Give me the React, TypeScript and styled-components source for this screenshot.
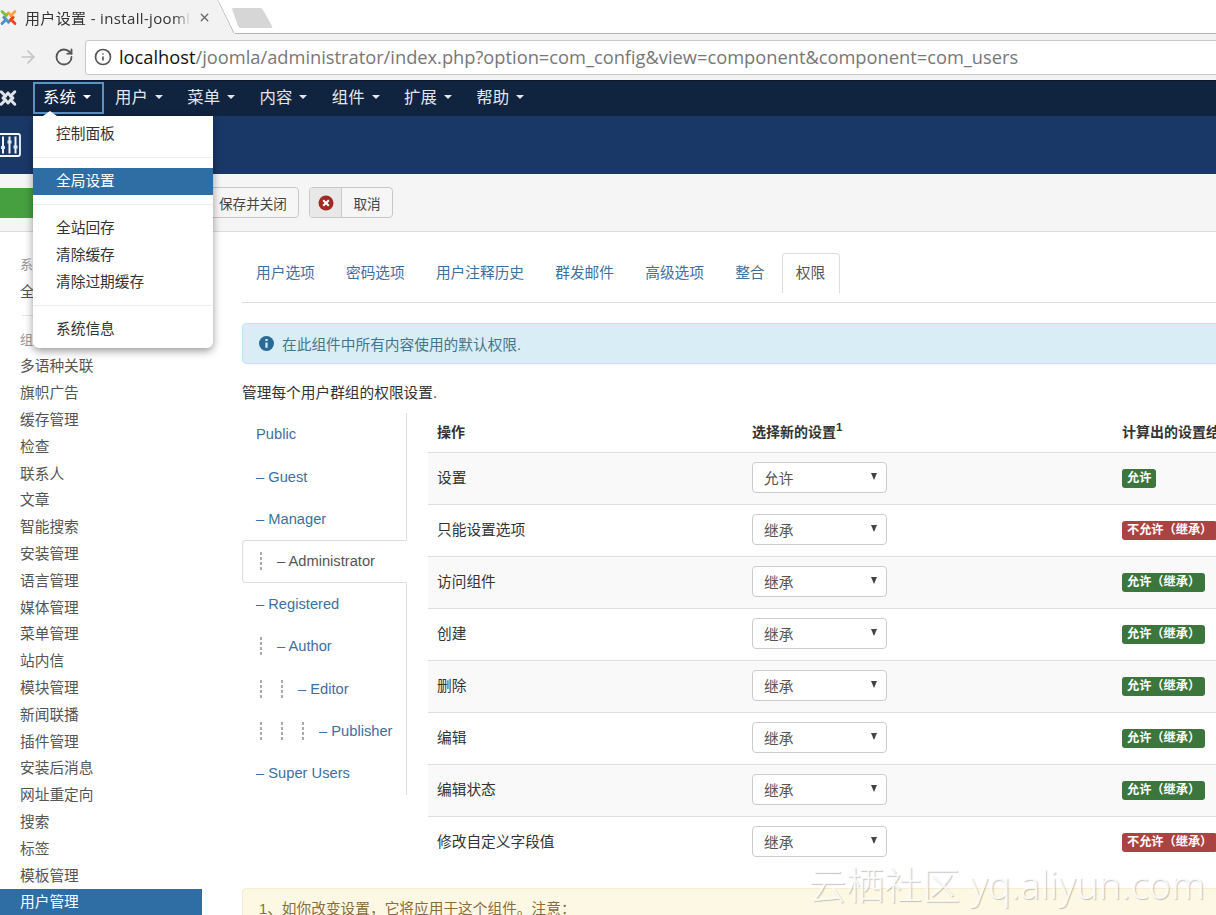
import React from "react";
import styled, { createGlobalStyle } from "styled-components";
import { ArrowLeft, ArrowRight, RotateCw, Info, X } from "lucide-react";

const Global = createGlobalStyle`
  html, body { margin: 0; padding: 0; background: #fff; }
  body { font-family: "Liberation Sans", "Noto Sans CJK SC", sans-serif; font-size: 14.7px; color: #333; }
  * { box-sizing: border-box; }
`;

const Page = styled.div`
  position: relative;
  width: 1216px;
  height: 915px;
  overflow: hidden;
  display: flex;
  flex-direction: column;
`;

const TabStrip = styled.div`
  position: relative;
  height: 34px;
  flex: none;
  display: flex;
  background: #fff;
  border-bottom: 1px solid #b5b5b5;
`;
const ChromeTab = styled.div`
  position: relative;
  width: 235px;
  height: 34px;
  flex: none;
  display: flex;
  align-items: center;
  background: #f2f2f2;
  clip-path: polygon(0 0, 218px 0, 235px 100%, 0 100%);
`;
const TabEdge = styled.svg`
  position: absolute;
  left: 216px;
  top: 0;
`;
const Favicon = styled.svg`
  flex: none;
  margin-left: -1px;
`;
const TabTitle = styled.div`
  width: 166px;
  margin-left: 7px;
  font-family: "Open Sans", "Noto Sans CJK SC", sans-serif;
  font-size: 15px;
  letter-spacing: 0.35px;
  color: #333;
  white-space: nowrap;
  overflow: hidden;
  mask-image: linear-gradient(90deg, #000 90%, transparent 100%);
`;
const TabClose = styled.span`
  display: flex;
  margin-left: 7px;
  color: #666;
`;
const NewTab = styled.svg`
  flex: none;
  margin: 7px 0 0 -4px;
`;

const AddressBar = styled.div`
  height: 47px;
  flex: none;
  display: flex;
  align-items: center;
  background: #f2f2f2;
  border-bottom: 1px solid #0b1a30;
`;
const BackIcon = styled.span`
  display: flex;
  margin-left: -18px;
  color: #5f6368;
`;
const ForwardIcon = styled.span`
  display: flex;
  margin-left: 16px;
  color: #c4c4c4;
`;
const ReloadIcon = styled.span`
  display: flex;
  margin-left: 16px;
  color: #555;
`;
const Omnibox = styled.div`
  flex: none;
  width: 1200px;
  height: 35px;
  margin-left: 11px;
  display: flex;
  align-items: center;
  background: #fff;
  border: 1px solid #c9c9c9;
  border-radius: 3px;
  padding-left: 8px;
`;
const SiteInfo = styled.span`
  display: flex;
  color: #555;
`;
const UrlText = styled.span`
  margin-left: 7px;
  padding-bottom: 2px;
  font-family: "Open Sans", sans-serif;
  font-size: 18.27px;
  color: #777;
  white-space: nowrap;
`;
const UrlHost = styled.span`
  color: #111;
`;

const Navbar = styled.nav`
  height: 35px;
  flex: none;
  display: flex;
  align-items: flex-start;
  padding-top: 1px;
  background: #10233f;
`;
const NavLogo = styled.svg`
  flex: none;
  margin: 6px 15px 0 -2px;
`;
const NavItem = styled.div<{ $open?: boolean }>`
  position: relative;
  height: 32px;
  flex: none;
  display: flex;
  align-items: center;
  gap: 7px;
  padding-bottom: 4px;
  padding-left: ${(p) => (p.$open ? "8px" : "11px")};
  border: ${(p) => (p.$open ? "2px solid #5b93c5" : "none")};
  width: ${(p) => (p.$open ? "71px" : "72.25px")};
  font-size: 16.4px;
  color: ${(p) => (p.$open ? "#fff" : "#e3e7ec")};
`;
const Caret = styled.i`
  width: 0;
  height: 0;
  border-left: 4.5px solid transparent;
  border-right: 4.5px solid transparent;
  border-top: 4.5px solid currentColor;
  margin-top: 2px;
`;

const Dropdown = styled.div`
  position: absolute;
  left: 33px;
  top: 116px;
  width: 180px;
  height: 232px;
  z-index: 5;
  display: flex;
  flex-direction: column;
  background: #fff;
  border-radius: 0 0 6px 6px;
  box-shadow: 0 3px 8px rgba(0, 0, 0, 0.4);
  padding-top: 5px;
  &::before {
    content: "";
    position: absolute;
    left: 10px;
    top: -5px;
    border-left: 7px solid transparent;
    border-right: 7px solid transparent;
    border-bottom: 5px solid #fff;
  }
`;
const MenuLink = styled.div<{ $active?: boolean }>`
  height: 27px;
  line-height: 27px;
  padding-left: 23px;
  flex: none;
  background: ${(p) => (p.$active ? "#2f6ea5" : "transparent")};
  color: ${(p) => (p.$active ? "#fff" : "#333")};
`;
const MenuDivider = styled.div`
  height: 1px;
  flex: none;
  margin: 9px 0 10px;
  background: #eee;
`;

const Header = styled.header`
  height: 58px;
  flex: none;
  display: flex;
  align-items: center;
  background: #1a3867;
`;
const HeaderIcon = styled.svg`
  flex: none;
  margin-left: -3px;
`;

const Toolbar = styled.div`
  height: 58px;
  flex: none;
  display: flex;
  align-items: center;
  gap: 10px;
  background: #f5f5f5;
  border-bottom: 1px solid #dcdcdc;
`;
const GreenButton = styled.div`
  width: 165px;
  height: 30px;
  display: flex;
  align-items: center;
  justify-content: center;
  background: #46a040;
  color: #fff;
  border-radius: 0 3px 3px 0;
  font-size: 13px;
`;
const ToolButton = styled.div`
  height: 31px;
  display: flex;
  align-items: stretch;
  background: #f6f6f6;
  border: 1px solid #c8c8c8;
  border-radius: 4px;
  font-size: 13.6px;
  color: #444;
  overflow: hidden;
`;
const ToolIcon = styled.span`
  width: 32px;
  flex: none;
  display: flex;
  align-items: center;
  justify-content: center;
  background: #e8e8e8;
  border-right: 1px solid #c8c8c8;
`;
const ToolLabel = styled.span`
  display: flex;
  align-items: center;
  padding: 0 11.5px 0 11px;
`;

const Body = styled.div`
  flex: 1;
  min-height: 0;
  display: flex;
`;
const Sidebar = styled.aside`
  width: 202px;
  flex: none;
  padding-top: 20px;
  display: flex;
  flex-direction: column;
`;
const SideHeading = styled.div`
  height: 26.8px;
  line-height: 26.8px;
  flex: none;
  padding-left: 20px;
  font-size: 13px;
  color: #999;
`;
const SideItem = styled.div<{ $active?: boolean }>`
  height: 26.8px;
  line-height: 26.8px;
  flex: none;
  padding-left: 20px;
  color: ${(p) => (p.$active ? "#fff" : "#555")};
  background: ${(p) => (p.$active ? "#2f6ea5" : "transparent")};
`;
const SideRule = styled.div`
  height: 1px;
  flex: none;
  margin: 9px 20px 11px 22px;
  background: #e5e5e5;
`;

const Main = styled.main`
  flex: none;
  width: 1100px;
  margin-left: 40px;
  padding-top: 21px;
`;
const Tabs = styled.div`
  height: 50px;
  display: flex;
  align-items: flex-start;
  border-bottom: 1px solid #ddd;
`;
const TabLink = styled.div<{ $active?: boolean }>`
  height: 40px;
  flex: none;
  display: flex;
  align-items: center;
  padding: 0 14px 4px 13px;
  margin-right: 2.2px;
  border: 1px solid ${(p) => (p.$active ? "#ddd" : "transparent")};
  border-bottom: none;
  border-radius: 4px 4px 0 0;
  background: ${(p) => (p.$active ? "#fff" : "transparent")};
  color: ${(p) => (p.$active ? "#555" : "#3d6f9f")};
`;
const InfoAlert = styled.div`
  height: 41px;
  margin-top: 20px;
  display: flex;
  align-items: center;
  gap: 8px;
  padding-left: 16px;
  background: #d9edf7;
  border: 1px solid #bce8f1;
  border-radius: 4px;
  color: #44758f;
`;
const InfoDot = styled.svg`
  flex: none;
`;
const Lead = styled.p`
  margin: 20px 0 11px;
  height: 18px;
  line-height: 18px;
  color: #333;
`;
const PermGrid = styled.div`
  display: flex;
  align-items: flex-start;
`;
const GroupList = styled.div`
  width: 165px;
  flex: none;
  height: 382px;
  border-right: 1px solid #ddd;
  display: flex;
  flex-direction: column;
`;
const GroupItem = styled.div<{ $active?: boolean }>`
  height: 42.4px;
  flex: none;
  display: flex;
  align-items: center;
  white-space: pre;
  padding-left: ${(p) => (p.$active ? "13px" : "14px")};
  color: ${(p) => (p.$active ? "#555" : "#3d6f9f")};
  ${(p) =>
    p.$active
      ? `
    background: #fff;
    border: 1px solid #ddd;
    border-right-color: #fff;
    border-radius: 4px 0 0 4px;
    margin-right: -1px;
  `
      : ""}
`;
const Level = styled.span`
  width: 21px;
  flex: none;
  height: 18px;
  &::before {
    content: "";
    display: block;
    width: 2px;
    height: 18px;
    margin-left: 4px;
    background: repeating-linear-gradient(180deg, #aaa 0 3px, transparent 3px 5px);
  }
`;
const PermTable = styled.table`
  width: 900px;
  margin-left: 21px;
  table-layout: fixed;
  border-collapse: collapse;
`;
const HeadCell = styled.th`
  height: 39px;
  padding: 0 9px 2px;
  text-align: left;
  font-weight: 700;
  font-size: 14px;
  color: #333;
  white-space: nowrap;
  &:nth-child(1) { width: 315px; }
  &:nth-child(2) { width: 370px; }
  sup { font-size: 11.5px; line-height: 0; }
`;
const Row = styled.tr`
  height: 52px;
  border-top: 1px solid #ddd;
  &:nth-child(odd) { background: #f9f9f9; }
`;
const Cell = styled.td<{ $lift?: number }>`
  padding: 0 9px ${(p) => p.$lift ?? 0}px;
  color: #333;
  white-space: nowrap;
`;
const SelectBox = styled.div`
  position: relative;
  width: 135px;
  height: 31px;
  padding-left: 11px;
  display: flex;
  align-items: center;
  background: #fff;
  border: 1px solid #ccc;
  border-radius: 4px;
  color: #555;
  &::after {
    content: "";
    position: absolute;
    right: 9px;
    top: 10px;
    border-left: 3.5px solid transparent;
    border-right: 3.5px solid transparent;
    border-top: 7px solid #444;
  }
`;
const Badge = styled.span<{ $ok: boolean }>`
  display: inline-block;
  height: 19px;
  line-height: 19px;
  padding: 0 5px;
  border-radius: 3px;
  font-size: 12.2px;
  font-weight: 700;
  color: #fff;
  background: ${(p) => (p.$ok ? "#3c763d" : "#a94442")};
`;
const WarnAlert = styled.div`
  height: 60px;
  margin-top: 20px;
  padding: 8px 16px;
  background: #fcf8e3;
  border: 1px solid #faebcc;
  border-radius: 4px;
  color: #8a6d3b;
`;
const Watermark = styled.div`
  position: absolute;
  right: 11px;
  bottom: 9px;
  z-index: 6;
  font-family: "Noto Sans", "Noto Sans CJK SC", sans-serif;
  font-size: 38px;
  font-weight: 300;
  line-height: 44px;
  white-space: nowrap;
  color: rgba(255, 255, 255, 0.9);
  text-shadow: 1px 1px 1px rgba(0, 0, 0, 0.22);
`;

const sideItems = ["多语种关联","旗帜广告","缓存管理","检查","联系人","文章","智能搜索","安装管理","语言管理","媒体管理","菜单管理","站内信","模块管理","新闻联播","插件管理","安装后消息","网址重定向","搜索","标签","模板管理"];
const navItems = ["用户","菜单","内容","组件","扩展","帮助"];
const tabs = ["用户选项","密码选项","用户注释历史","群发邮件","高级选项","整合"];
const groups = [
  { name: "Public", level: 0, dash: false },
  { name: "Guest", level: 0, dash: true },
  { name: "Manager", level: 0, dash: true },
  { name: "Administrator", level: 1, dash: true, active: true },
  { name: "Registered", level: 0, dash: true },
  { name: "Author", level: 1, dash: true },
  { name: "Editor", level: 2, dash: true },
  { name: "Publisher", level: 3, dash: true },
  { name: "Super Users", level: 0, dash: true },
];
const rows = [
  { action: "设置", value: "允许", ok: true, badge: "允许" },
  { action: "只能设置选项", value: "继承", ok: false, badge: "不允许（继承）" },
  { action: "访问组件", value: "继承", ok: true, badge: "允许（继承）" },
  { action: "创建", value: "继承", ok: true, badge: "允许（继承）" },
  { action: "删除", value: "继承", ok: true, badge: "允许（继承）" },
  { action: "编辑", value: "继承", ok: true, badge: "允许（继承）" },
  { action: "编辑状态", value: "继承", ok: true, badge: "允许（继承）" },
  { action: "修改自定义字段值", value: "继承", ok: false, badge: "不允许（继承）" },
];

function JoomlaMark({ size, mono }: { size: number; mono?: boolean }) {
  const c = mono ? ["#dfe3e8", "#dfe3e8", "#dfe3e8", "#dfe3e8"] : ["#7ac143", "#f9a541", "#f44321", "#5091cd"];
  return (
    <g transform={`scale(${size / 20})`} fill="none" strokeWidth="3" strokeLinecap="round" strokeLinejoin="round">
      <path d="M3.2 3.8 L7.6 8.2 M5.2 10 L10 5.2" stroke={c[0]} />
      <path d="M16.8 3.8 L12.4 8.2 M10 5.2 L14.8 10" stroke={c[1]} />
      <path d="M16.8 16.2 L12.4 11.8 M14.8 10 L10 14.8" stroke={c[2]} />
      <path d="M3.2 16.2 L7.6 11.8 M10 14.8 L5.2 10" stroke={c[3]} />
    </g>
  );
}

export default function App() {
  return (
    <Page>
      <Global />
      <TabStrip>
        <ChromeTab>
          <Favicon width="19" height="19" viewBox="0 0 19 19"><JoomlaMark size={19} /></Favicon>
          <TabTitle>用户设置 - install-joomla</TabTitle>
          <TabClose><X size={13} strokeWidth={2.4} /></TabClose>
          <TabEdge width="20" height="34" viewBox="0 0 20 34"><path d="M2 0 L18 33" stroke="#b0b0b0" fill="none" /></TabEdge>
        </ChromeTab>
        <NewTab width="44" height="22" viewBox="0 0 44 22"><path d="M1 2 Q1 1 3 1 L29 1 Q31 1 32 3 L41 19 Q42 21 40 21 L10 21 Q8 21 7 19 Z" fill="#d6d6d6" /></NewTab>
      </TabStrip>
      <AddressBar>
        <BackIcon><ArrowLeft size={20} /></BackIcon>
        <ForwardIcon><ArrowRight size={20} /></ForwardIcon>
        <ReloadIcon><RotateCw size={20} strokeWidth={2.2} /></ReloadIcon>
        <Omnibox>
          <SiteInfo><Info size={18} strokeWidth={2.2} /></SiteInfo>
          <UrlText><UrlHost>localhost</UrlHost>/joomla/administrator/index.php?option=com_config&amp;view=component&amp;component=com_users</UrlText>
        </Omnibox>
      </AddressBar>
      <Navbar>
        <NavLogo width="20" height="20" viewBox="0 0 20 20"><JoomlaMark size={20} mono /></NavLogo>
        <NavItem $open>系统<Caret /></NavItem>
        {navItems.map((n) => (
          <NavItem key={n}>{n}<Caret /></NavItem>
        ))}
      </Navbar>
      <Dropdown>
        <MenuLink>控制面板</MenuLink>
        <MenuDivider />
        <MenuLink $active>全局设置</MenuLink>
        <MenuDivider />
        <MenuLink>全站回存</MenuLink>
        <MenuLink>清除缓存</MenuLink>
        <MenuLink>清除过期缓存</MenuLink>
        <MenuDivider />
        <MenuLink>系统信息</MenuLink>
      </Dropdown>
      <Header>
        <HeaderIcon width="24" height="24" viewBox="0 0 24 24" fill="none" stroke="#f2f6fa">
          <rect x="1" y="1" width="22" height="22" rx="2" strokeWidth="1.8" />
          <path d="M6 3.5v17M12.5 3.5v17M18.5 3.5v17" strokeWidth="2" />
          <path d="M4 14.5h4M10.5 9h4M16.5 14h4" strokeWidth="3" stroke="#d5ecf5" />
        </HeaderIcon>
      </Header>
      <Toolbar>
        <GreenButton>保存</GreenButton>
        <ToolButton>
          <ToolIcon />
          <ToolLabel>保存并关闭</ToolLabel>
        </ToolButton>
        <ToolButton>
          <ToolIcon>
            <svg width="16" height="16" viewBox="0 0 16 16"><circle cx="8" cy="8" r="7.5" fill="#a12a22" /><path d="M5.2 5.2l5.6 5.6M10.8 5.2l-5.6 5.6" stroke="#fff" strokeWidth="2" /></svg>
          </ToolIcon>
          <ToolLabel>取消</ToolLabel>
        </ToolButton>
      </Toolbar>
      <Body>
        <Sidebar>
          <SideHeading>系统</SideHeading>
          <SideItem>全局设置</SideItem>
          <SideRule />
          <SideHeading>组件</SideHeading>
          {sideItems.map((s) => (
            <SideItem key={s}>{s}</SideItem>
          ))}
          <SideItem $active>用户管理</SideItem>
        </Sidebar>
        <Main>
          <Tabs>
            {tabs.map((t) => (
              <TabLink key={t}>{t}</TabLink>
            ))}
            <TabLink $active>权限</TabLink>
          </Tabs>
          <InfoAlert>
            <InfoDot width="15" height="15" viewBox="0 0 16 16">
              <circle cx="8" cy="8" r="8" fill="#2a6a94" />
              <path d="M8 3.2v2.2M8 7v5.6" stroke="#d9edf7" strokeWidth="2.4" />
            </InfoDot>
            在此组件中所有内容使用的默认权限.
          </InfoAlert>
          <Lead>管理每个用户群组的权限设置.</Lead>
          <PermGrid>
            <GroupList>
              {groups.map((g) => (
                <GroupItem key={g.name} $active={g.active}>
                  {Array.from({ length: g.level }).map((_, i) => (
                    <Level key={i} />
                  ))}
                  {g.dash ? "– " : ""}
                  {g.name}
                </GroupItem>
              ))}
            </GroupList>
            <PermTable>
              <thead>
                <tr>
                  <HeadCell>操作</HeadCell>
                  <HeadCell>选择新的设置<sup>1</sup></HeadCell>
                  <HeadCell>计算出的设置结果<sup>2</sup></HeadCell>
                </tr>
              </thead>
              <tbody>
                {rows.map((r) => (
                  <Row key={r.action}>
                    <Cell $lift={4}>{r.action}</Cell>
                    <Cell $lift={2}><SelectBox>{r.value}</SelectBox></Cell>
                    <Cell><Badge $ok={r.ok}>{r.badge}</Badge></Cell>
                  </Row>
                ))}
              </tbody>
            </PermTable>
          </PermGrid>
          <WarnAlert>1、如你改变设置，它将应用于这个组件。注意：</WarnAlert>
        </Main>
      </Body>
      <Watermark>云栖社区 yq.aliyun.com</Watermark>
    </Page>
  );
}
